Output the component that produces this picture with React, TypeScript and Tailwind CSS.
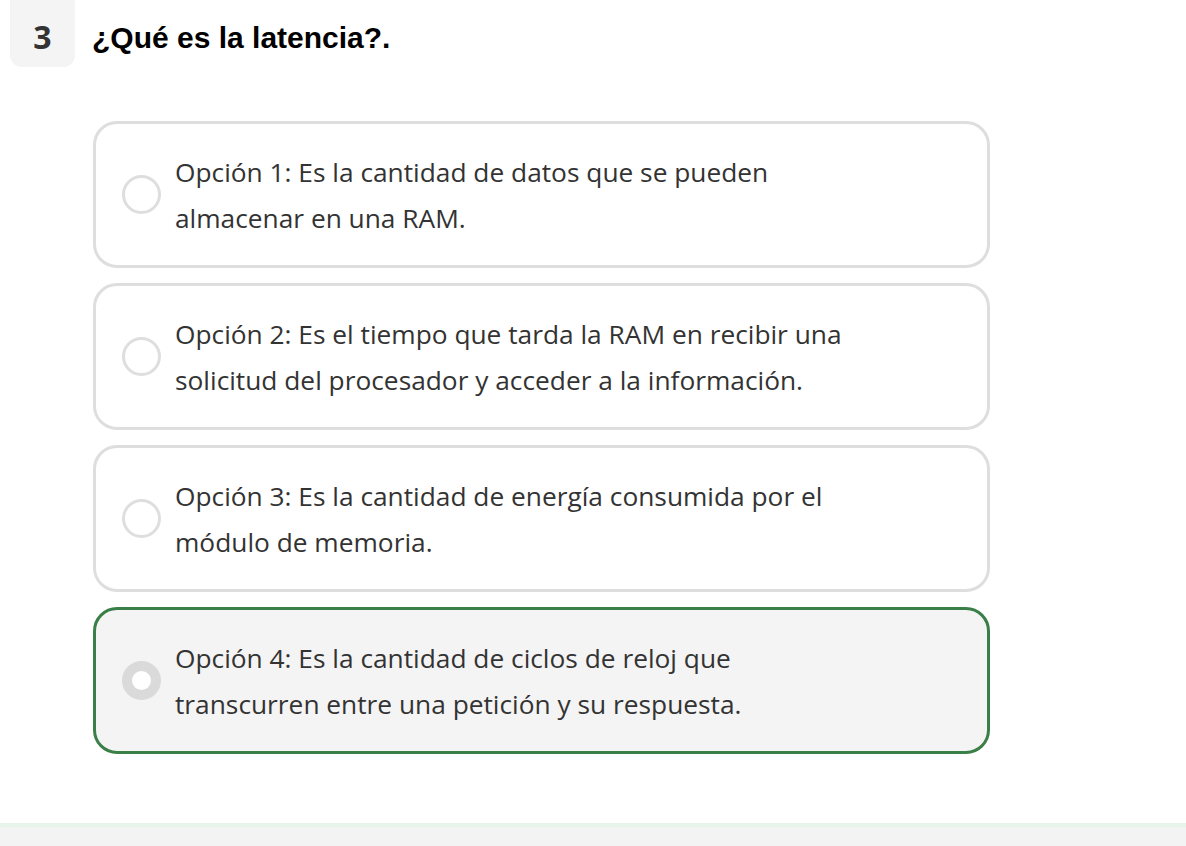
const options = [
  {
    id: 1,
    lines: ['Opción 1: Es la cantidad de datos que se pueden', 'almacenar en una RAM.'],
  },
  {
    id: 2,
    lines: [
      'Opción 2: Es el tiempo que tarda la RAM en recibir una',
      'solicitud del procesador y acceder a la información.',
    ],
  },
  {
    id: 3,
    lines: ['Opción 3: Es la cantidad de energía consumida por el', 'módulo de memoria.'],
  },
  {
    id: 4,
    lines: [
      'Opción 4: Es la cantidad de ciclos de reloj que',
      'transcurren entre una petición y su respuesta.',
    ],
  },
];

const selectedId = 4;

const OptionCard: React.FC<{ lines: string[]; selected: boolean }> = ({ lines, selected }) => {
  return (
    <div
      className={
        selected
          ? 'flex items-center h-[147px] rounded-[24px] border-[3px] border-[#3a7f47] bg-[#f4f4f4] pl-[26px]'
          : 'flex items-center h-[147px] rounded-[24px] border-[3px] border-[#dedede] bg-white pl-[26px]'
      }
    >
      {selected ? (
        <span className="shrink-0 w-[39px] h-[39px] rounded-full border-[10px] border-[#dadada] bg-white" />
      ) : (
        <span className="shrink-0 w-[39px] h-[39px] rounded-full border-[3px] border-[#dedede] bg-white" />
      )}
      <p className="ml-[14px] text-[#333333] text-[26.3px] leading-[46px] font-['Open_Sans',sans-serif]">
        {lines[0]}
        <br />
        {lines[1]}
      </p>
    </div>
  );
};

export default function App() {
  return (
    <div className="min-h-screen bg-white flex flex-col">
      <header className="flex items-start pl-[10px]">
        <div className="w-[65px] h-[67px] rounded-b-[12px] bg-[#f4f4f4] flex items-center justify-center pt-[6px]">
          <span className="text-[32px] font-bold text-[#333333] font-['Open_Sans',sans-serif]">3</span>
        </div>
        <h1 className="ml-[17px] mt-[20px] text-[30px] font-bold text-black font-['Liberation_Sans',Arial,sans-serif] leading-[36px]">
          ¿Qué es la latencia?.
        </h1>
      </header>

      <section className="ml-[93px] mt-[54px] w-[897px] flex flex-col gap-[15px]">
        {options.map((opt) => (
          <OptionCard key={opt.id} lines={opt.lines} selected={opt.id === selectedId} />
        ))}
      </section>

      <div className="flex-1 min-h-[69px]" />
      <footer className="h-[24px] border-t-4 border-[#e6f4ea] bg-[#f3f3f3]" />
    </div>
  );
}
